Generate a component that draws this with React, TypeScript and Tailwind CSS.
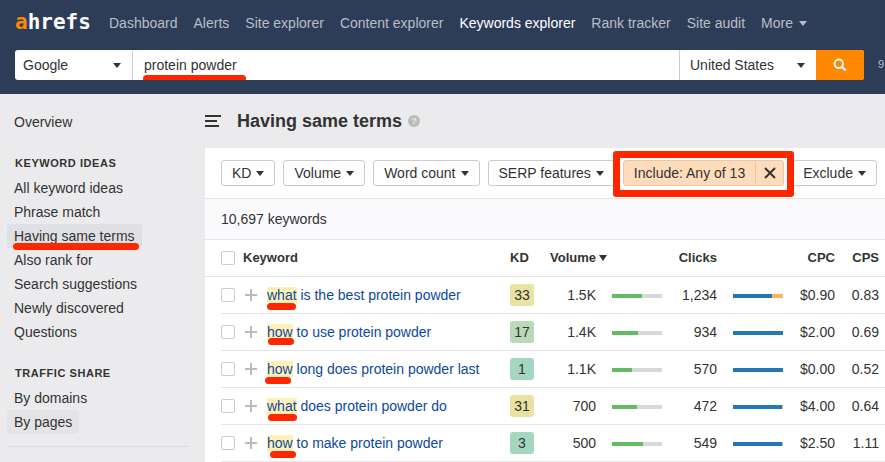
import React from "react";

const FONT = "font-['Liberation_Sans',Arial,sans-serif]";

function Caret({ className = "" }: { className?: string }) {
  return (
    <svg viewBox="0 0 8 5" aria-hidden="true" className={`h-[5px] w-2 shrink-0 fill-current ${className}`}>
      <path d="M0 0h8L4 5z" />
    </svg>
  );
}

function Marker({ className }: { className: string }) {
  return <span aria-hidden="true" className={`pointer-events-none absolute h-[7px] rounded-full bg-[#ff2600] ${className}`} />;
}

const navLinks = ["Dashboard", "Alerts", "Site explorer", "Content explorer", "Keywords explorer", "Rank tracker", "Site audit"];

function Header() {
  return (
    <header className="bg-[#2e3d57] pb-[14px]">
      <nav className="flex h-[50px] items-center whitespace-nowrap pb-1 pl-[15px] text-[#b8bec9]">
        <a href="#" className="w-[94px] pb-[2px] font-['DejaVu_Sans_Mono',monospace] text-[21px] leading-6 font-bold text-white">
          <span className="text-[#ff8800]">a</span>hrefs
        </a>
        <div className="flex gap-4">
          {navLinks.map((label) => (
            <a key={label} href="#" className={label === "Keywords explorer" ? "text-white" : ""}>
              {label}
            </a>
          ))}
          <button type="button" className="flex items-center gap-[6px]">
            More
            <Caret />
          </button>
        </div>
      </nav>
      <div className="flex h-[30px] items-center overflow-hidden pl-[15px] text-[#333]">
        <form className="flex h-full min-w-0 flex-1 overflow-hidden rounded-[3px] bg-white" onSubmit={(e) => e.preventDefault()}>
          <div className="relative w-[118px] shrink-0 border-r border-[#ccc]">
            <select aria-label="Search engine" className="h-full w-full appearance-none pl-2 outline-none">
              <option>Google</option>
            </select>
            <Caret className="pointer-events-none absolute top-[13px] right-[11px]" />
          </div>
          <div className="relative min-w-0 flex-1">
            <input aria-label="Keyword" defaultValue="protein powder" className="h-full w-full pl-[11px] outline-none" />
            <Marker className="top-[25px] left-[10px] w-[103px]" />
          </div>
          <div className="relative w-[137px] shrink-0 border-l border-[#ccc]">
            <select aria-label="Country" className="h-full w-full appearance-none pl-[10px] outline-none">
              <option>United States</option>
            </select>
            <Caret className="pointer-events-none absolute top-[13px] right-[11px]" />
          </div>
          <button type="submit" aria-label="Search" className="flex w-12 shrink-0 items-center justify-center bg-[#ff8800] text-white">
            <svg viewBox="0 0 14 14" className="h-[14px] w-[14px]" fill="none" stroke="currentColor" strokeWidth="2">
              <circle cx="5.8" cy="5.8" r="4.2" />
              <path d="M9 9l3.6 3.4" strokeWidth="2.4" />
            </svg>
          </button>
        </form>
        <span className="w-[21px] shrink-0 pl-[14px] text-[11px] text-[#b8bec9]">9</span>
      </div>
    </header>
  );
}

const ideas = ["All keyword ideas", "Phrase match", "Having same terms", "Also rank for", "Search suggestions", "Newly discovered", "Questions"];

function SideLink({ label, tone = "" }: { label: string; tone?: string }) {
  return (
    <li className="flex">
      <a href="#" className={`relative h-6 rounded-[3px] px-[7px] leading-6 ${tone}`}>
        {label}
        {label === "Having same terms" && <Marker className="top-[19px] left-[6px] w-[126px]" />}
      </a>
    </li>
  );
}

function SideTitle({ children }: { children: React.ReactNode }) {
  return <h2 className="mt-4 h-[26px] pl-2 text-[11px] leading-[26px] font-bold tracking-wider uppercase">{children}</h2>;
}

function Sidebar() {
  return (
    <aside className="w-[205px] shrink-0 pt-4 pr-4 pl-[7px]">
      <ul>
        <SideLink label="Overview" />
      </ul>
      <SideTitle>Keyword ideas</SideTitle>
      <ul>
        {ideas.map((label) => (
          <SideLink key={label} label={label} tone={label === "Having same terms" ? "bg-[#dfe0e3]" : ""} />
        ))}
      </ul>
      <SideTitle>Traffic share</SideTitle>
      <ul>
        <SideLink label="By domains" />
        <SideLink label="By pages" tone="bg-[#e4e4e6]" />
      </ul>
      <hr className="mt-3 border-[#dcdcdf]" />
    </aside>
  );
}

function FilterButton({ label }: { label: string }) {
  return (
    <button type="button" className="flex h-[26px] shrink-0 items-center gap-[5px] rounded-[3px] border border-[#ccc] px-[10px]">
      {label}
      <Caret />
    </button>
  );
}

function Filters() {
  return (
    <div className="flex h-[51px] items-center gap-2 border-b border-[#e6e6e8] pl-4 whitespace-nowrap">
      <FilterButton label="KD" />
      <FilterButton label="Volume" />
      <FilterButton label="Word count" />
      <FilterButton label="SERP features" />
      <div className="relative flex h-[26px] shrink-0">
        <span aria-hidden="true" className="pointer-events-none absolute -inset-x-[10px] -top-[9px] -bottom-[11px] z-10 rounded-[3px] border-[7px] border-[#ff2600]" />
        <span aria-hidden="true" className="absolute -inset-x-[3px] -inset-y-[2px] bg-white" />
        <button type="button" className="relative rounded-l-[3px] border border-[#ecc9a5] bg-[#ffdcbb] px-[10px]">
          Include: Any of 13
        </button>
        <button
          type="button"
          aria-label="Remove include filter"
          className="relative flex w-7 items-center justify-center rounded-r-[3px] border border-l-0 border-[#ecc9a5] bg-[#ffdcbb]"
        >
          <svg viewBox="0 0 12 12" className="h-3 w-3" fill="none" stroke="currentColor" strokeWidth="2">
            <path d="M1 1l10 10M11 1L1 11" />
          </svg>
        </button>
      </div>
      <FilterButton label="Exclude" />
    </div>
  );
}

type Row = {
  hit: string;
  rest: string;
  mark: string;
  kd: number;
  tone: string;
  volume: string;
  volumeShare: number;
  clicks: string;
  clickShare: number;
  cpc: string;
  cps: string;
};

const rows: Row[] = [
  { hit: "what", rest: " is the best protein powder", mark: "top-4 left-0 w-[29px]", kd: 33, tone: "bg-[#e8e3a0]", volume: "1.5K", volumeShare: 60, clicks: "1,234", clickShare: 78, cpc: "$0.90", cps: "0.83" },
  { hit: "how", rest: " to use protein powder", mark: "top-[14px] left-px w-[26px]", kd: 17, tone: "bg-[#b8dab8]", volume: "1.4K", volumeShare: 52, clicks: "934", clickShare: 100, cpc: "$2.00", cps: "0.69" },
  { hit: "how", rest: " long does protein powder last", mark: "top-4 -left-[2px] w-[26px]", kd: 1, tone: "bg-[#a5d6c0]", volume: "1.1K", volumeShare: 40, clicks: "570", clickShare: 100, cpc: "$0.00", cps: "0.52" },
  { hit: "what", rest: " does protein powder do", mark: "top-4 left-px w-[29px]", kd: 31, tone: "bg-[#e8e3a0]", volume: "700", volumeShare: 50, clicks: "472", clickShare: 98, cpc: "$4.00", cps: "0.64" },
  { hit: "how", rest: " to make protein powder", mark: "top-4 left-[3px] w-[26px]", kd: 3, tone: "bg-[#a5d6c0]", volume: "500", volumeShare: 62, clicks: "549", clickShare: 98, cpc: "$2.50", cps: "1.11" },
];

function Checkbox({ label }: { label: string }) {
  return <input type="checkbox" aria-label={label} className="block h-[14px] w-[14px] appearance-none rounded-[2px] border border-[#ccc] bg-white" />;
}

function Bar({ share, fill, track }: { share: number; fill: string; track: string }) {
  return (
    <div className={`mt-px ml-4 h-1 w-[50px] ${track}`}>
      <div className={`h-full ${fill}`} style={{ width: `${share}%` }} />
    </div>
  );
}

const line = "h-[37px] border-b border-[#e6e6e8] p-0";

function KeywordTable() {
  return (
    <table className="w-full table-fixed border-separate border-spacing-0 whitespace-nowrap">
      <colgroup>
        <col className="w-4" />
        <col className="w-[22px]" />
        <col className="w-6" />
        <col />
        <col className="w-6" />
        <col className="w-[62px]" />
        <col className="w-[66px]" />
        <col className="w-[55px]" />
        <col className="w-[66px]" />
        <col className="w-[52px]" />
        <col className="w-[50px]" />
      </colgroup>
      <thead>
        <tr className="text-left text-[13px]">
          <td className={line} />
          <td className={line}>
            <Checkbox label="Select all keywords" />
          </td>
          <th colSpan={2} className={line}>Keyword</th>
          <th className={line}>KD</th>
          <th colSpan={2} className={line}>
            <button type="button" className="flex items-center gap-[3px] pl-4 font-bold">
              Volume
              <svg viewBox="0 0 8 6" aria-hidden="true" className="h-[6px] w-2 fill-current">
                <path d="M0 0h8L4 6z" />
              </svg>
            </button>
          </th>
          <th className={`${line} text-right`}>Clicks</th>
          <td className={line} />
          <th className={`${line} text-right`}>CPC</th>
          <th className="h-[37px] border-b border-[#e6e6e8] p-0 pr-[6px] text-right">CPS</th>
        </tr>
      </thead>
      <tbody>
        {rows.map((r) => (
          <tr key={r.hit + r.rest} className="text-right">
            <td className="p-0" />
            <td className={line}>
              <Checkbox label={`Select ${r.hit}${r.rest}`} />
            </td>
            <td className={line}>
              <button type="button" aria-label="Add to list" className="ml-[2px] block text-[#bbb]">
                <svg viewBox="0 0 12 12" className="h-3 w-3" fill="none" stroke="currentColor" strokeWidth="2">
                  <path d="M6 0v12M0 6h12" />
                </svg>
              </button>
            </td>
            <td className={`${line} text-left`}>
              <a href="#" className="text-[#0c4a9e]">
                <span className="relative bg-[#fff0b8]">
                  {r.hit}
                  <Marker className={r.mark} />
                </span>
                {r.rest}
              </a>
            </td>
            <td className={line}>
              <span className={`block h-[22px] w-6 rounded-[3px] text-center leading-[22px] ${r.tone}`}>{r.kd}</span>
            </td>
            <td className={line}>{r.volume}</td>
            <td className={line}>
              <Bar share={r.volumeShare} fill="bg-[#65bb65]" track="bg-[#d8d8d8]" />
            </td>
            <td className={line}>{r.clicks}</td>
            <td className={line}>
              <Bar share={r.clickShare} fill="bg-[#2278b5]" track="bg-[#ffb060]" />
            </td>
            <td className={line}>{r.cpc}</td>
            <td className="h-[37px] border-b border-[#e6e6e8] p-0 pr-[6px]">{r.cps}</td>
          </tr>
        ))}
      </tbody>
    </table>
  );
}

export default function App() {
  return (
    <div className={`min-h-screen overflow-hidden bg-[#ebebed] text-sm text-[#333] ${FONT}`}>
      <Header />
      <div className="flex">
        <Sidebar />
        <main className="min-w-0 flex-1">
          <div className="flex h-[54px] items-center">
            <button type="button" aria-label="Toggle menu" className="mr-4">
              <svg viewBox="0 0 16 12" className="h-3 w-4 fill-current">
                <path d="M0 0h16v2H0zM0 5h12v2H0zM0 10h14v2H0z" />
              </svg>
            </button>
            <h1 className="text-lg font-bold">Having same terms</h1>
            <button type="button" aria-label="Help" className="ml-[6px] flex h-3 w-3 items-center justify-center rounded-full bg-[#bbb] text-[9px] font-bold text-[#ebebed]">
              ?
            </button>
          </div>
          <div className="bg-white">
            <Filters />
            <p className="flex h-[41px] items-center border-b border-[#e6e6e8] bg-[#fafafc] pl-4">10,697 keywords</p>
            <KeywordTable />
          </div>
        </main>
      </div>
    </div>
  );
}
